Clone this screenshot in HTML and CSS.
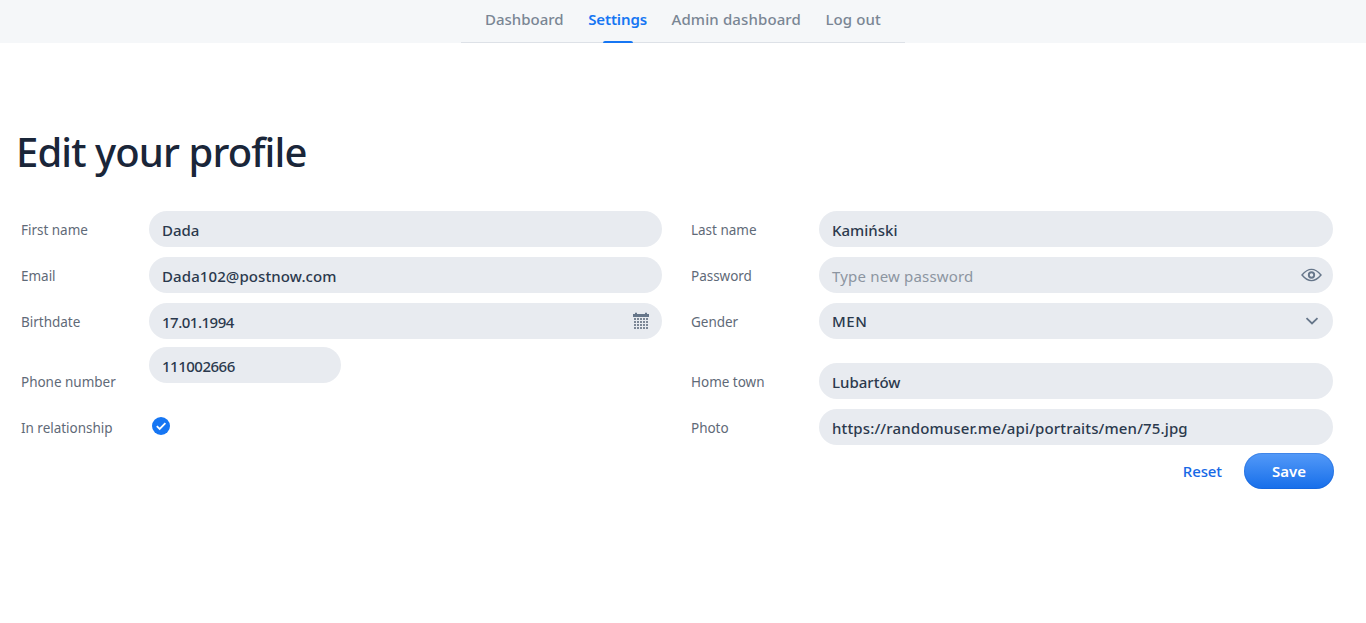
FILE: index.html
```html
<!DOCTYPE html>
<html lang="en">
<head>
<meta charset="utf-8">
<title>Edit your profile</title>
<link rel="stylesheet" href="styles.css">
</head>
<body>
<header class="navbar">
  <nav class="tabs">
    <a class="tab">Dashboard</a>
    <a class="tab active">Settings</a>
    <a class="tab tab-admin">Admin dashboard</a>
    <a class="tab tab-logout">Log out</a>
  </nav>
</header>
<main class="page">
  <h1 class="title">Edit your profile</h1>
  <form class="form">
    <div class="column">
      <div class="row"><label class="label">First name</label><div class="field"><span>Dada</span></div></div>
      <div class="row"><label class="label">Email</label><div class="field"><span class="email">Dada102@postnow.com</span></div></div>
      <div class="row"><label class="label">Birthdate</label><div class="field"><span class="digits">17.01.1994</span>
        <svg class="icon-calendar" width="16" height="17" viewBox="0 0 16 17"><path fill="#66768a" d="M0 2h2V1q1-1 2 0v1h8V1q1-1 2 0v1h2v3H0z"/><path d="M2 6v11M5 6v11M8 6v11M11 6v11M14 6v11" stroke="#7c8796" stroke-width="2" stroke-dasharray="2 1" fill="none"/></svg>
      </div></div>
      <div class="row phone-row"><label class="label">Phone number</label><div class="field short"><span class="digits">111002666</span></div></div>
      <div class="row"><label class="label">In relationship</label>
        <svg class="checkbox" width="18" height="18" viewBox="0 0 18 18"><circle cx="9" cy="9" r="9" fill="#1676f3"/><path d="M4.8 9.1 7.7 12l5.7-5.8" fill="none" stroke="#fff" stroke-width="1.8"/></svg>
      </div>
    </div>
    <div class="column">
      <div class="row"><label class="label">Last name</label><div class="field"><span>Kamiński</span></div></div>
      <div class="row"><label class="label">Password</label><div class="field"><span class="placeholder">Type new password</span>
        <svg class="icon-eye" width="21" height="14" viewBox="0 0 21 14"><path d="M1 7Q10.500-4.200 20 7 10.500 18.200 1 7z" fill="none" stroke="#66768a" stroke-width="1.400"/><circle cx="10.500" cy="7" r="2.700" fill="none" stroke="#66768a" stroke-width="1.900"/></svg>
      </div></div>
      <div class="row"><label class="label">Gender</label><div class="field select"><span class="gender">MEN</span>
        <svg class="icon-chevron" width="14" height="8" viewBox="0 0 14 8"><path d="m1.500 1.200 5.500 5.300 5.500-5.300" fill="none" stroke="#66768a" stroke-width="1.800"/></svg>
      </div></div>
      <div class="row town-row"><label class="label">Home town</label><div class="field"><span>Lubartów</span></div></div>
      <div class="row"><label class="label">Photo</label><div class="field"><span class="url">https://randomuser.me/api/portraits/men/75.jpg</span></div></div>
    </div>
  </form>
  <div class="actions"><a class="reset">Reset</a><button class="save">Save</button></div>
</main>
</body>
</html>
```
FILE: styles.css
```css
* { box-sizing: border-box; }
body { margin: 0; background: #fff; color: #2b394d; font: 500 16px/24px "Noto Sans", "Open Sans", sans-serif; }
.navbar { display: flex; justify-content: center; height: 43px; background: #f5f7f9; }
.tabs { display: flex; width: 444px; height: 43px; padding: 7px 24px 0 24px; justify-content: space-between; border-bottom: 1px solid #dde1e7; }
.tab { position: relative; height: 36px; color: #7a8694; font-size: 15px; }
.tab.active { color: #1676f3; font-weight: 600; letter-spacing: -.12px; }
.tab.active::after { content: ""; position: absolute; left: 50%; bottom: 0; width: 30px; height: 2px; margin-left: -15px; background: #1676f3; border-radius: 2px 2px 0 0; }
.tab-admin { letter-spacing: .12px; }
.tab-logout { letter-spacing: .12px; }
.page { padding: 84px 33px 0 17px; }
.title { margin: 0 0 0 -1px; color: #1a2639; font-size: 40px; font-weight: 500; line-height: 50px; letter-spacing: -.9px; }
.form { display: grid; grid-template-columns: 645px 646px; gap: 25px; margin-top: 34px; }
.column { padding-left: 4px; }
.row { display: flex; height: 36px; margin-bottom: 10px; align-items: center; }
.label { width: 128px; padding-top: 2px; color: #5f6a78; font-size: 13.5px; font-weight: 400; line-height: 20px; letter-spacing: -.02px; }
.field { display: flex; flex: 1; height: 36px; padding: 1px 13px 0; align-items: center; justify-content: space-between; border-radius: 18px; background: #e8ebf0; font-size: 15px; }
.select { padding-top: 0; }
.field.short { flex: 0 0 192px; margin-top: -32px; }
.phone-row, .town-row { margin-top: 24px; }
.placeholder { color: #8c95a1; font-weight: 400; letter-spacing: .18px; }
.email { letter-spacing: .1px; }
.digits { letter-spacing: -.5px; }
.gender { letter-spacing: .5px; }
.url { letter-spacing: .14px; }
.checkbox { margin: -2px 0 0 3px; }
.icon-calendar { margin-top: -2px; }
.icon-eye { margin: -2px -2px 0 0; }
.icon-chevron { margin-right: 1px; }
.actions { display: flex; justify-content: flex-end; align-items: center; gap: 22px; margin: -2px -1px 0 0; font-size: 15px; }
.reset { color: #1769e6; letter-spacing: -.1px; }
.save { width: 90px; height: 36px; padding: 0 0 1px; border: 0; border-radius: 18px; background: linear-gradient(#549af8, #166eea); box-shadow: inset 0 0 0 1px rgba(20, 90, 200, .3); color: #fff; font: 600 15px/24px "Noto Sans", sans-serif; }
```
